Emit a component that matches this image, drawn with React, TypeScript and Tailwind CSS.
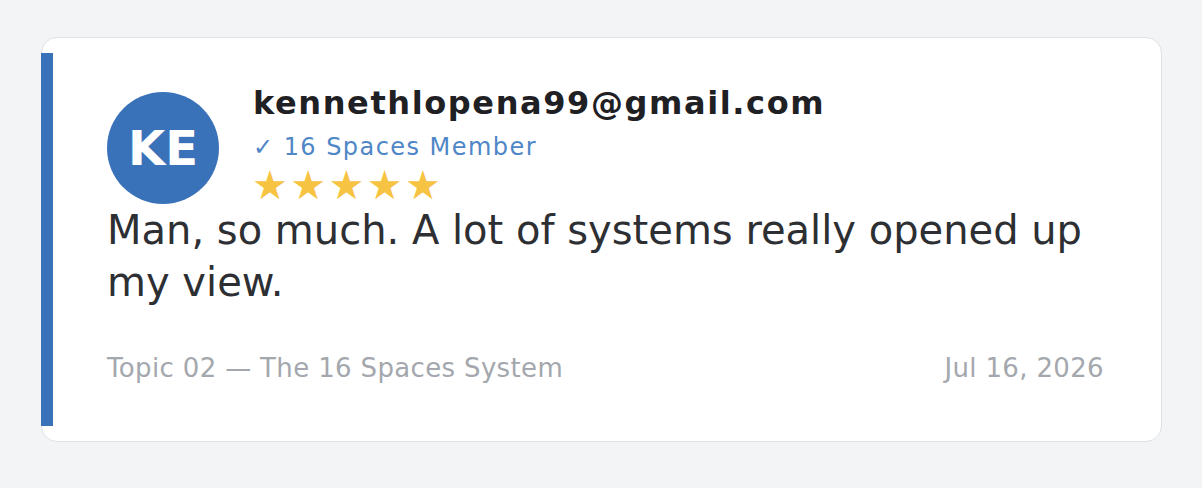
import React from 'react';

type Review = {
    email: string;
    initials: string;
    badge: string;
    rating: number;
    body: string;
    topic: string;
    date: string;
};

const review: Review = {
    email: 'kennethlopena99@gmail.com',
    initials: 'KE',
    badge: '16 Spaces Member',
    rating: 5,
    body: 'Man, so much. A lot of systems really opened up my view.',
    topic: 'Topic 02 — The 16 Spaces System',
    date: 'Jul 16, 2026',
};

function ReviewCard({ item }: { item: Review }) {
    return (
        <div className="flex rounded-2xl border border-[#dfe1e5] bg-white">
            <div className="my-[15px] -ml-px w-3 shrink-0 bg-[#3a72ba]" />
            <div className="flex-1 pt-[54px] pr-[57px] pb-[57px] pl-[54px]">
                <div className="flex items-start gap-[34px]">
                    <div className="flex h-[112px] w-[112px] shrink-0 items-center justify-center rounded-full bg-[#3a72ba] text-[48px] font-bold text-white">
                        {item.initials}
                    </div>
                    <div className="-mt-[8px] flex h-[120px] flex-col">
                        <div className="text-[32px] leading-[38px] font-bold tracking-[1.6px] text-[#1f2023]">
                            {item.email}
                        </div>
                        <div className="mt-[11px] text-[24px] leading-[28px] tracking-[1.45px] text-[#4f86c6]">
                            ✓ {item.badge}
                        </div>
                        <div className="mt-[1px] -ml-[1px] text-[40px] leading-[47px] tracking-[2.4px] text-[#f6c343]">
                            {'★'.repeat(item.rating)}
                        </div>
                    </div>
                </div>
                <p className="text-[40px] leading-[52px] text-[#2d2f33]">{item.body}</p>
                <div className="mt-[44px] flex items-center justify-between text-[26px] leading-[32px] tracking-[0.35px] text-[#a4a7ad]">
                    <span>{item.topic}</span>
                    <span>{item.date}</span>
                </div>
            </div>
        </div>
    );
}

export default function App() {
    return (
        <div
            className="min-h-[488px] bg-[#f3f4f6] pt-[37px] pr-[40px] pb-[47px] pl-[41px]"
            style={{ fontFamily: '"DejaVu Sans", sans-serif' }}
        >
            <ReviewCard item={review} />
        </div>
    );
}
